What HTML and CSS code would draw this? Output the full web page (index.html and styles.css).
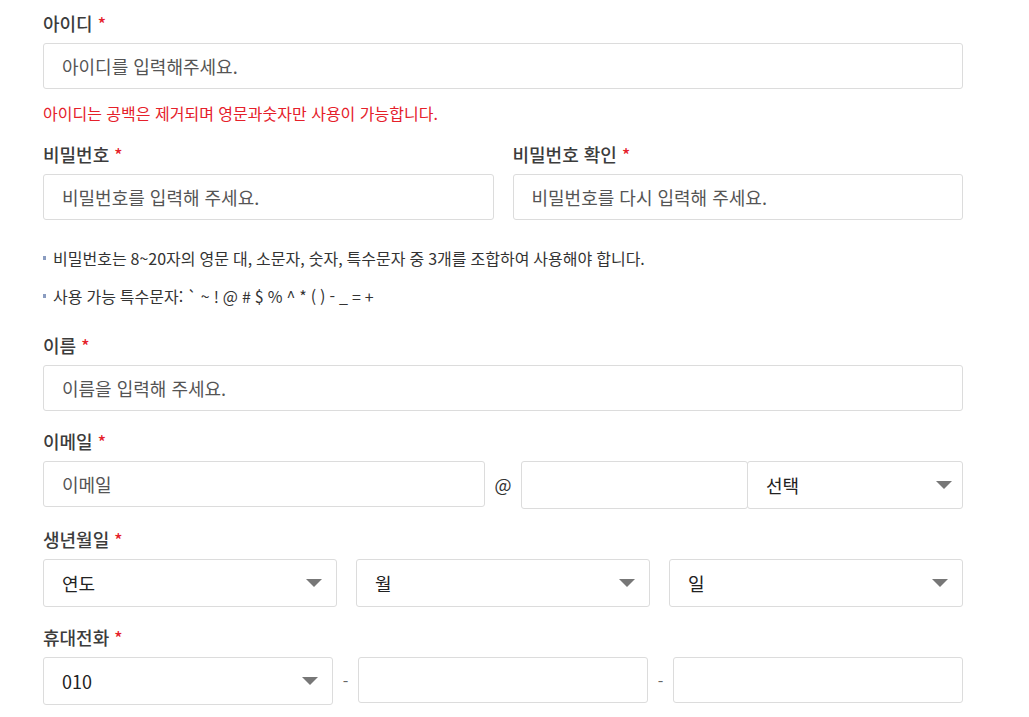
FILE: index.html
```html
<!DOCTYPE html>
<html lang="ko">
<head>
<meta charset="utf-8">
<title>회원가입</title>
<link rel="stylesheet" href="styles.css">
</head>
<body>
<form class="form">
  <div class="field">
    <label class="label">아이디 <span class="req">*</span></label>
    <input class="input" type="text" placeholder="아이디를 입력해주세요.">
    <p class="error">아이디는 공백은 제거되며 영문과숫자만 사용이 가능합니다.</p>
  </div>

  <div class="field field-pw">
    <div class="row two">
      <div class="col">
        <label class="label">비밀번호 <span class="req">*</span></label>
        <input class="input" type="password" placeholder="비밀번호를 입력해 주세요.">
      </div>
      <div class="col">
        <label class="label">비밀번호 확인 <span class="req">*</span></label>
        <input class="input" type="password" placeholder="비밀번호를 다시 입력해 주세요.">
      </div>
    </div>
    <ul class="hints">
      <li>비밀번호는 8~20자의 영문 대, 소문자, 숫자, 특수문자 중 3개를 조합하여 사용해야 합니다.</li>
      <li>사용 가능 특수문자: ` ~ ! @ # $ % ^ * ( ) - _ = +</li>
    </ul>
  </div>

  <div class="field">
    <label class="label">이름 <span class="req">*</span></label>
    <input class="input" type="text" placeholder="이름을 입력해 주세요.">
  </div>

  <div class="field">
    <label class="label">이메일 <span class="req">*</span></label>
    <div class="row email">
      <input class="input email-id" type="text" placeholder="이메일">
      <span class="sep at">@</span>
      <div class="domain">
        <input class="input domain-input" type="text">
        <div class="select domain-select"><span>선택</span></div>
      </div>
    </div>
  </div>

  <div class="field">
    <label class="label">생년월일 <span class="req">*</span></label>
    <div class="row three">
      <div class="select"><span>연도</span></div>
      <div class="select"><span>월</span></div>
      <div class="select"><span>일</span></div>
    </div>
  </div>

  <div class="field">
    <label class="label">휴대전화 <span class="req">*</span></label>
    <div class="row phone">
      <div class="select phone-part"><span>010</span></div>
      <span class="sep dash">-</span>
      <input class="input phone-part" type="text">
      <span class="sep dash">-</span>
      <input class="input phone-part" type="text">
    </div>
  </div>
</form>
</body>
</html>
```

FILE: styles.css
```css
* { box-sizing: border-box; }

html, body {
  margin: 0;
  padding: 0;
  background: #fff;
}

body {
  font-family: "Noto Sans CJK KR", "Noto Sans", sans-serif;
  color: #333;
}

.form {
  width: 920px;
  margin-left: 43px;
  padding-top: 11px;
  display: flex;
  flex-direction: column;
}

.field {
  display: flex;
  flex-direction: column;
  margin-bottom: 18px;
}

.label {
  display: block;
  height: 24px;
  line-height: 24px;
  font-size: 18px;
  font-weight: 500;
  color: #3c3c3c;
  margin-bottom: 8px;
  white-space: nowrap;
}

.req {
  color: #e5202a;
  font-weight: 500;
  font-size: 17px;
}

.input {
  display: block;
  width: 100%;
  height: 46px;
  border: 1px solid #dcdcdc;
  border-radius: 3px;
  padding: 0 18px;
  font-family: "Noto Sans CJK KR", "Noto Sans", sans-serif;
  font-size: 18px;
  color: #222;
  background: #fff;
  outline: none;
}

.input::placeholder {
  color: #555;
  opacity: 1;
}

.error {
  margin: 13px 0 0;
  font-size: 16px;
  line-height: 22px;
  color: #e5202a;
}

.row {
  display: flex;
  align-items: flex-start;
}

.row.two {
  gap: 19px;
}

.row.two .col {
  flex: 1 1 0;
  min-width: 0;
  display: flex;
  flex-direction: column;
}

.hints {
  list-style: none;
  margin: 27px 0 0;
  padding: 0;
}

.hints li {
  display: flex;
  align-items: center;
  font-size: 16px;
  line-height: 22px;
  color: #333;
  word-spacing: -0.5px;
  margin-bottom: 16px;
}

.hints li:last-child {
  margin-bottom: 0;
}

.hints li::before {
  content: "";
  width: 3px;
  height: 4px;
  background: #8a9cc0;
  margin: 0 7px 0 0;
  flex: none;
}

.field-pw {
  margin-bottom: 26px;
}

.select {
  height: 48px;
  border: 1px solid #dcdcdc;
  border-radius: 3px;
  padding: 0 14px 0 18px;
  display: flex;
  align-items: center;
  justify-content: space-between;
  font-size: 18px;
  color: #222;
  background: #fff;
}

.select::after {
  content: "";
  width: 0;
  height: 0;
  border-left: 8px solid transparent;
  border-right: 8px solid transparent;
  border-top: 8px solid #777;
}

.email .email-id {
  width: 442px;
  flex: none;
}

.sep {
  flex: none;
  font-size: 18px;
  color: #333;
  text-align: center;
}

.at {
  width: 36px;
  line-height: 46px;
}

.domain {
  width: 442px;
  flex: none;
  display: flex;
}

.domain-input {
  width: 227px;
  height: 48px;
  flex: none;
}

.domain-select {
  width: 216px;
  flex: none;
  margin-left: -1px;
  padding-right: 10px;
}

.row.three {
  gap: 19px;
}

.row.three .select {
  flex: 1 1 0;
}

.phone .phone-part {
  width: 290px;
  flex: none;
}

.dash {
  width: 25px;
  line-height: 48px;
  font-size: 16px;
  color: #666;
}
```
